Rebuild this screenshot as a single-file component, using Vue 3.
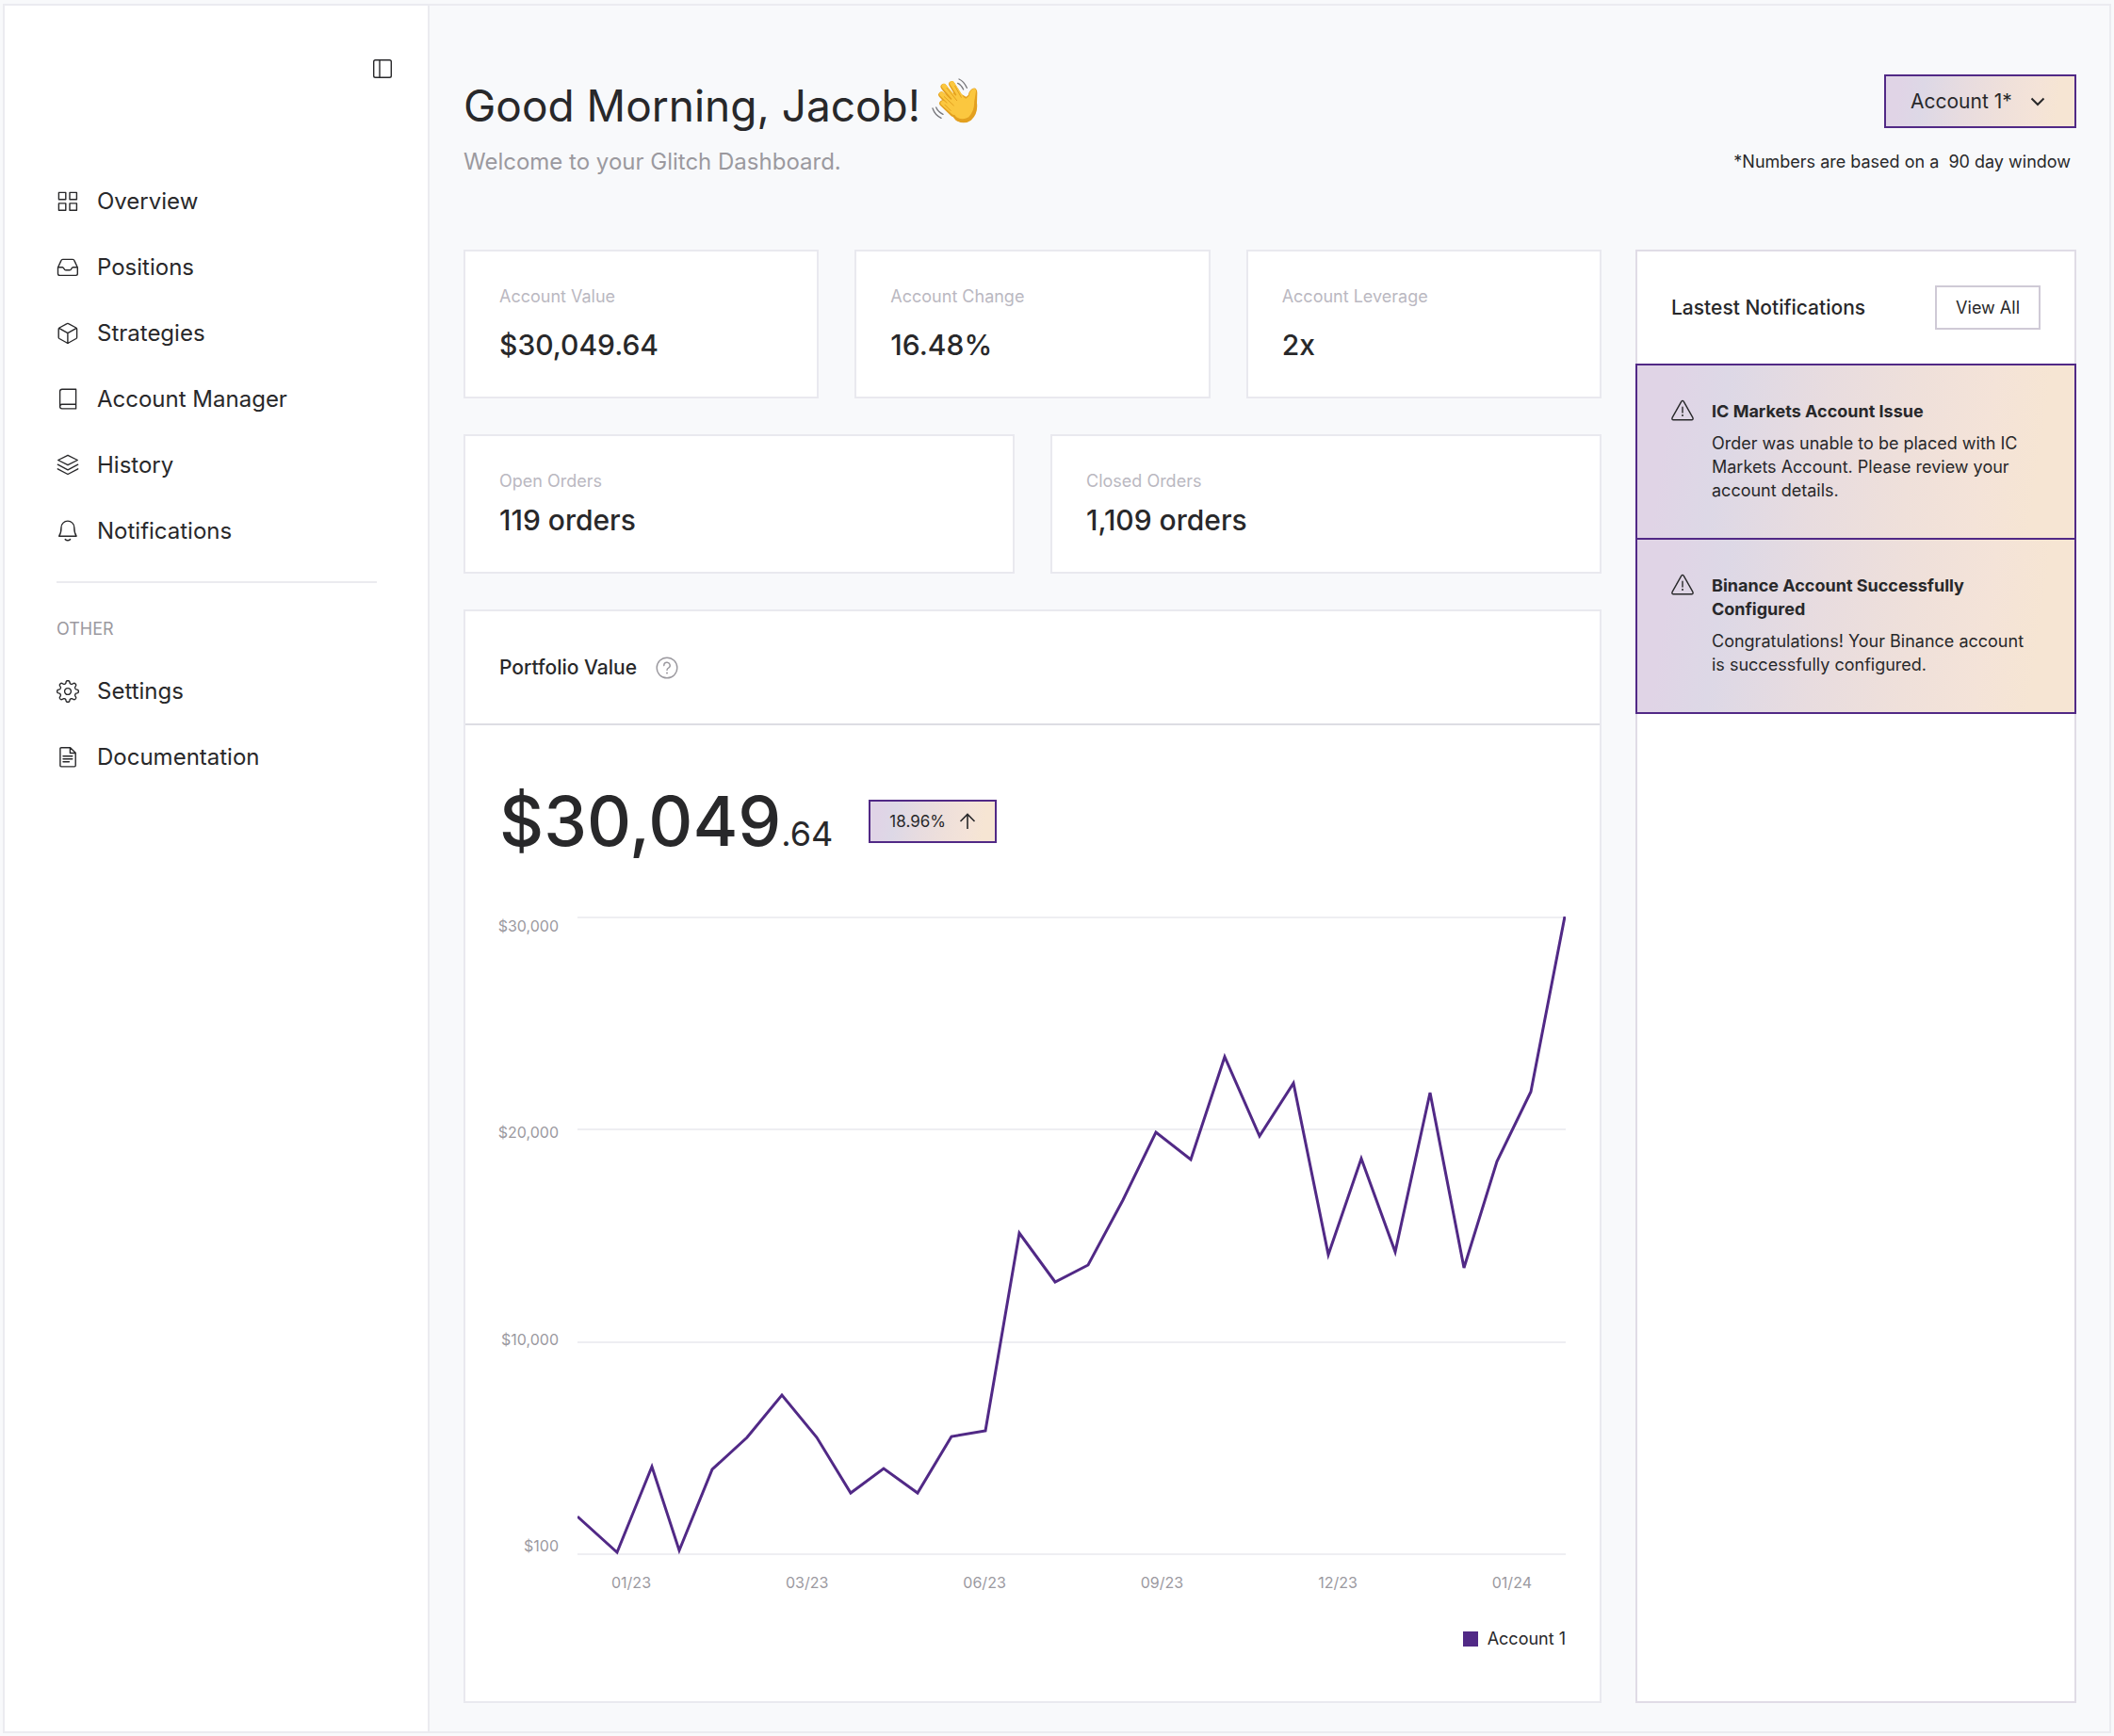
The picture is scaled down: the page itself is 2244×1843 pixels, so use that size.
<script setup>
import { ref } from 'vue'

const account = ref('Account 1*')

/* Cog outline: eight rounded teeth traced in polar coordinates */
const cogPath = (() => {
  const points = []
  for (let i = 0; i < 160; i++) {
    const t = (i / 160) * Math.PI * 2
    const r = 9.9 + 1.5 * Math.tanh(1.8 * Math.cos(8 * t))
    points.push(`${(12 + r * Math.sin(t)).toFixed(2)} ${(12 - r * Math.cos(t)).toFixed(2)}`)
  }
  return `M${points.join('L')}Z`
})()

const mainLinks = [
  {
    label: 'Overview',
    icon: 'M2.4 2.4h7.4v7.4H2.4zM14 2.4h7.4v7.4H14zM2.4 13.9h7.4v7.4H2.4zM14 13.9h7.4v7.4H14z',
  },
  {
    label: 'Positions',
    icon: 'M1.5 12 4.9 4.6Q5.4 3.4 6.6 3.4H17.2Q18.4 3.4 18.9 4.6L22.3 12V18.6Q22.3 20.4 20.5 20.4H3.3Q1.5 20.4 1.5 18.6ZM1.5 11.8H6.6Q7.6 12.2 8.1 13.4Q8.6 14.7 9.9 14.7H13.9Q15.2 14.7 15.7 13.4Q16.2 12.2 17.2 11.8H22.3',
  },
  {
    label: 'Strategies',
    icon: 'M11.1 1.6Q11.9 1.1 12.7 1.6L20.8 6Q21.6 6.5 21.6 7.4V16.2Q21.6 17 20.8 17.5L12.7 22Q11.9 22.4 11.1 22L3 17.5Q2.2 17 2.2 16.2V7.4Q2.2 6.5 3 6ZM2.6 6.4 11.9 11.7 21.2 6.4M11.9 11.7V22',
  },
  {
    label: 'Account Manager',
    icon: 'M20.6 17.3H5.8Q3.6 17.3 3.6 19.6Q3.6 21.9 5.8 21.9H20.6V1.2H6Q3.6 1.2 3.6 3.6V19.6',
  },
  {
    label: 'History',
    icon: 'M12 1.3 22.3 6.5 12 11.7 1.7 6.5ZM1.3 11.2 12 16.8 22.7 11.2M1.3 15.8 12 21.5 22.7 15.8',
  },
  {
    label: 'Notifications',
    icon: 'M2.7 17.2C4.5 14.6 5 12 5 8A6.9 6.9 0 0 1 18.8 8C18.8 12 19.3 14.6 21.1 17.2ZM9.2 20.6Q11.9 22.8 14.6 20.6',
  },
]

const otherLinks = [
  { label: 'Settings', icon: `${cogPath}M15.4 12A3.4 3.4 0 1 1 8.6 12A3.4 3.4 0 1 1 15.4 12Z` },
  {
    label: 'Documentation',
    icon: 'M5 1.7H14.6L20.2 7.3V20.8Q20.2 21.9 19.1 21.9H5Q3.9 21.9 3.9 20.8V2.8Q3.9 1.7 5 1.7ZM14.4 1.7V7.5H20.2M7 10.8H16.8M7 13.8H16.8M7 16.8H13.4',
  },
]

const accountStats = [
  { label: 'Account Value', value: '$30,049.64' },
  { label: 'Account Change', value: '16.48%' },
  { label: 'Account Leverage', value: '2x' },
]

const orderStats = [
  { label: 'Open Orders', value: '119 orders' },
  { label: 'Closed Orders', value: '1,109 orders' },
]

const alerts = [
  {
    title: 'IC Markets Account Issue',
    text: 'Order was unable to be placed with IC Markets Account. Please review your account details.',
  },
  {
    title: 'Binance Account Successfully Configured',
    text: 'Congratulations! Your Binance account is successfully configured.',
  },
]

const valueTicks = ['$30,000', '$20,000', '$10,000', '$100']
const dateTicks = ['01/23', '03/23', '06/23', '09/23', '12/23', '01/24']
const gridLines = [1, 226, 452, 677]

const linePoints = [
  [0, 637], [42, 675], [79, 584], [108, 673], [143, 587], [180, 553], [217, 508],
  [254, 553], [290, 612], [325, 586], [361, 612], [397, 552], [433, 546], [469, 336],
  [507, 388], [542, 370], [579, 301], [614, 229], [651, 258], [687, 149], [724, 233],
  [760, 177], [797, 359], [832, 257], [868, 356], [905, 187], [941, 373], [976, 260],
  [1012, 186], [1048, 0],
].map((p) => p.join(',')).join(' ')
</script>

<template>
  <div class="page">
    <div class="frame">
      <aside class="sidebar">
        <button class="toggle" type="button" aria-label="Collapse sidebar">
          <svg class="icon" viewBox="0 0 24 24">
            <rect x="2.7" y="2.7" width="18.6" height="18.6" rx="1.8" />
            <path d="M9 2.7V21.3" />
          </svg>
        </button>
        <nav class="nav">
          <a v-for="link in mainLinks" :key="link.label" class="nav-link" href="#">
            <svg class="icon" viewBox="0 0 24 24"><path :d="link.icon" /></svg>
            {{ link.label }}
          </a>
        </nav>
        <hr class="divider" />
        <h2 class="nav-heading">OTHER</h2>
        <nav class="nav">
          <a v-for="link in otherLinks" :key="link.label" class="nav-link" href="#">
            <svg class="icon" viewBox="0 0 24 24"><path :d="link.icon" /></svg>
            {{ link.label }}
          </a>
        </nav>
      </aside>

      <main class="main">
        <header class="header">
          <div class="greeting">
            <h1 class="title">
              Good Morning, Jacob!
              <svg class="wave" viewBox="24 18 150 150" aria-hidden="true">
                <g fill="none" stroke-linecap="round">
                  <g stroke="#e3a01f" stroke-width="19">
                    <path d="M88 40 118 90M62 48 102 102M55 74 95 118M58 101 92 134" />
                  </g>
                  <path d="M68 106 104 150Q126 164 146 150Q166 132 162 100L163 68Q163 56 156 60Q147 66 146 78L134 88 100 68Z" fill="#e3a01f" stroke="#e3a01f" stroke-width="12" stroke-linejoin="round" />
                  <g stroke="#fbc73f" stroke-width="15">
                    <path d="M89 38 121 88M63 46 108 98M56 72 98 112M60 100 94 130" />
                  </g>
                  <path d="M76 104 104 140Q122 152 138 142Q156 124 155 96L160 66Q162 56 156 60Q148 66 147 80L134 92 108 76Z" fill="#fbc73f" stroke="#fbc73f" stroke-width="9" stroke-linejoin="round" />
                  <path d="M72 52 104 92M64 80 94 108M66 106 84 124M98 46 118 82" stroke="#e3a01f" stroke-width="3" />
                  <path d="M111 24Q126 30 136 52M107 37Q118 42 125 57M27 117Q34 138 54 148M38 114Q44 128 60 136" stroke="#77777b" stroke-width="4" />
                </g>
              </svg>
            </h1>
            <p class="subtitle">Welcome to your Glitch Dashboard.</p>
          </div>
          <div class="account">
            <div class="account-picker">
              <select v-model="account" class="account-select" aria-label="Account">
                <option>Account 1*</option>
              </select>
              <svg class="chevron" viewBox="0 0 16 10"><path d="M1.5 1.5 8 8 14.5 1.5" /></svg>
            </div>
            <p class="note">*Numbers are based on a&nbsp; 90 day window</p>
          </div>
        </header>

        <div class="columns">
          <div class="overview">
            <div class="stats three">
              <section v-for="stat in accountStats" :key="stat.label" class="card stat">
                <h3 class="stat-label">{{ stat.label }}</h3>
                <p class="stat-value">{{ stat.value }}</p>
              </section>
            </div>
            <div class="stats two">
              <section v-for="stat in orderStats" :key="stat.label" class="card stat compact">
                <h3 class="stat-label">{{ stat.label }}</h3>
                <p class="stat-value">{{ stat.value }}</p>
              </section>
            </div>

            <section class="card portfolio">
              <div class="portfolio-header">
                <h2 class="panel-title">Portfolio Value</h2>
                <button class="help" type="button" aria-label="About portfolio value">
                  <svg class="icon" viewBox="0 0 24 24">
                    <circle cx="12" cy="12" r="10.8" />
                    <path d="M8.8 9.6A3.2 3.2 0 1 1 13.6 12.2Q12 13 12 14.4" />
                    <circle class="dot" cx="12" cy="17.6" r="1" />
                  </svg>
                </button>
              </div>
              <div class="portfolio-body">
                <div class="total-row">
                  <p class="total">$30,049<span class="cents">.64</span></p>
                  <span class="change">
                    18.96%
                    <svg class="arrow" viewBox="0 0 18 18"><path d="M9 17V1.5M1.5 9 9 1.5 16.5 9" /></svg>
                  </span>
                </div>
                <div class="chart">
                  <div class="value-axis">
                    <span v-for="tick in valueTicks" :key="tick">{{ tick }}</span>
                  </div>
                  <div class="plot">
                    <svg class="lines" viewBox="0 0 1049 678" preserveAspectRatio="none">
                      <line v-for="y in gridLines" :key="y" class="grid" x1="0" x2="1049" :y1="y" :y2="y" />
                      <polyline class="series" :points="linePoints" />
                    </svg>
                    <div class="date-axis">
                      <span v-for="tick in dateTicks" :key="tick">{{ tick }}</span>
                    </div>
                  </div>
                </div>
                <div class="legend"><span class="swatch"></span>Account 1</div>
              </div>
            </section>
          </div>

          <section class="card notifications">
            <div class="notifications-header">
              <h2 class="panel-title">Lastest Notifications</h2>
              <button class="view-all" type="button">View All</button>
            </div>
            <ul class="alerts">
              <li v-for="alert in alerts" :key="alert.title" class="alert">
                <svg class="icon" viewBox="0 0 24 24">
                  <path d="M10.7 2.4Q12 .4 13.3 2.4L22.9 19.4Q23.7 21.6 21.6 21.8H2.4Q.3 21.6 1.1 19.4ZM12 8.2V14" />
                  <circle class="dot" cx="12" cy="17" r="1" />
                </svg>
                <div>
                  <h3 class="alert-title">{{ alert.title }}</h3>
                  <p class="alert-text">{{ alert.text }}</p>
                </div>
              </li>
            </ul>
          </section>
        </div>
      </main>
    </div>
  </div>
</template>

<style>
body {
  margin: 0;
  background: #f8f9fb;
}
</style>

<style scoped>
.page {
  --ink: #28282a;
  --muted: #9b999f;
  --soft: #bab8c1;
  --line: #e9e9ef;
  --purple: #512986;
  --blend: linear-gradient(98deg, #e0d4e6 8%, #ddd8e6 20%, #e8dcdf 42%, #efe0da 62%, #f4e3d8 78%, #f6e5d3 90%);
  box-sizing: border-box;
  min-height: 100vh;
  padding: 4px 3px;
  display: flex;
  font-family: Inter, 'Liberation Sans', sans-serif;
  font-size: 18px;
  line-height: 24px;
  color: var(--ink);
}
.page * {
  box-sizing: border-box;
}
h1, h2, h3, p, ul {
  margin: 0;
  padding: 0;
}
button, select {
  font: inherit;
  color: inherit;
  cursor: pointer;
}
svg {
  display: block;
  flex: none;
  fill: none;
  stroke: currentColor;
}
.frame {
  flex: 1;
  display: flex;
  border: 2px solid #ebebf0;
}
.icon {
  width: 24px;
  height: 24px;
  stroke-width: 1.4;
  stroke-linecap: round;
  stroke-linejoin: round;
}
.dot {
  fill: currentColor;
  stroke: none;
}

.sidebar {
  flex: none;
  width: 451px;
  padding: 55px 54px 0 55px;
  background: #fff;
  border-right: 2px solid #ebebf0;
  display: flex;
  flex-direction: column;
}
.toggle, .help {
  display: flex;
  padding: 0;
  border: 0;
  background: none;
}
.toggle {
  align-self: flex-end;
  margin: 0 -18px 94px 0;
}
.nav {
  display: flex;
  flex-direction: column;
}
.nav-link {
  display: flex;
  align-items: center;
  gap: 19px;
  height: 70px;
  font-size: 24px;
  color: inherit;
  text-decoration: none;
}
.divider {
  width: 100%;
  margin: 18px 0 37px;
  border: 0;
  border-top: 2px solid #ebebef;
}
.nav-heading {
  margin-bottom: 19px;
  font-size: 18px;
  font-weight: 400;
  color: var(--muted);
}

.main {
  flex: 1;
  min-width: 0;
  padding: 73px 35px 30px 36px;
  display: flex;
  flex-direction: column;
}
.header {
  display: flex;
  justify-content: space-between;
  align-items: flex-end;
  margin-bottom: 77px;
}
.title {
  display: flex;
  align-items: flex-start;
  gap: 12px;
  margin-bottom: 14px;
  font-size: 46px;
  line-height: 60px;
  font-weight: 400;
}
.wave {
  width: 50px;
  height: 50px;
  stroke: none;
}
.subtitle {
  font-size: 24px;
  line-height: 32px;
  color: var(--muted);
}
.account {
  display: flex;
  flex-direction: column;
  align-items: flex-end;
  gap: 20px;
}
.account-picker {
  position: relative;
}
.account-select {
  appearance: none;
  width: 204px;
  height: 57px;
  padding: 0 26px;
  border: 2px solid var(--purple);
  border-radius: 0;
  background: var(--blend);
  font-size: 21px;
}
.chevron {
  position: absolute;
  top: 24px;
  right: 33px;
  width: 16px;
  height: 10px;
  stroke-width: 2;
  pointer-events: none;
}
.note {
  padding-right: 6px;
  line-height: 32px;
}

.columns {
  flex: 1;
  display: grid;
  grid-template-columns: minmax(0, 1fr) 468px;
  gap: 36px;
}
.overview {
  display: flex;
  flex-direction: column;
  gap: 38px;
}
.card {
  background: #fff;
  border: 2px solid var(--line);
}
.stats {
  display: grid;
  gap: 38px;
}
.three {
  grid-template-columns: repeat(3, minmax(0, 1fr));
}
.two {
  grid-template-columns: repeat(2, minmax(0, 1fr));
}
.stat {
  display: flex;
  flex-direction: column;
  gap: 20px;
  padding: 36px;
}
.compact {
  gap: 10px;
}
.stat-label {
  font-size: 18px;
  font-weight: 400;
  color: var(--soft);
}
.stat-value {
  font-size: 30px;
  line-height: 38px;
  font-weight: 500;
}

.portfolio {
  flex: 1;
}
.portfolio-header {
  display: flex;
  align-items: center;
  gap: 20px;
  height: 121px;
  padding: 0 36px;
  border-bottom: 2px solid #dddde3;
}
.panel-title {
  font-size: 21px;
  font-weight: 500;
}
.help {
  color: var(--muted);
}
.portfolio-body {
  padding: 62px 36px 54px;
}
.total-row {
  display: flex;
  align-items: center;
  gap: 38px;
  margin-bottom: 61px;
}
.total {
  font-size: 73px;
  line-height: 80px;
  font-weight: 500;
}
.cents {
  font-size: 36px;
  line-height: 40px;
  font-weight: 400;
}
.change {
  display: flex;
  align-items: center;
  gap: 14px;
  height: 46px;
  padding: 0 20px;
  border: 2px solid var(--purple);
  background: var(--blend);
  font-size: 17px;
}
.arrow {
  width: 18px;
  height: 18px;
  stroke-width: 1.6;
}
.chart {
  display: flex;
  align-items: flex-start;
  gap: 20px;
  font-size: 16px;
  line-height: 20px;
  color: var(--muted);
}
.value-axis {
  flex: none;
  width: 63px;
  height: 678px;
  display: flex;
  flex-direction: column;
  justify-content: space-between;
  align-items: flex-end;
}
.plot {
  flex: 1;
  min-width: 0;
}
.lines {
  width: 100%;
  height: 678px;
}
.grid {
  stroke: #eeeef2;
  stroke-width: 2;
}
.series {
  stroke: var(--purple);
  stroke-width: 3;
  vector-effect: non-scaling-stroke;
}
.date-axis {
  display: flex;
  justify-content: space-between;
  padding: 19px 36px 0;
}
.legend {
  display: flex;
  align-items: center;
  justify-content: flex-end;
  gap: 10px;
  margin-top: 38px;
}
.swatch {
  width: 16px;
  height: 16px;
  background: var(--purple);
}

.notifications {
  border-color: #e0dce6;
}
.notifications-header {
  display: flex;
  align-items: center;
  justify-content: space-between;
  height: 119px;
  padding: 0 36px;
}
.view-all {
  height: 47px;
  padding: 0 20px;
  border: 2px solid #cfcad6;
  background: #fff;
}
.alerts {
  margin: 0 -2px;
  list-style: none;
}
.alert {
  display: flex;
  gap: 19px;
  padding: 36px 36px 38px;
  border: 2px solid var(--purple);
  background: var(--blend);
  line-height: 25px;
}
.alert + .alert {
  border-top: 0;
}
.alert-title {
  margin-bottom: 9px;
  font-size: 18px;
  font-weight: 700;
}
</style>
